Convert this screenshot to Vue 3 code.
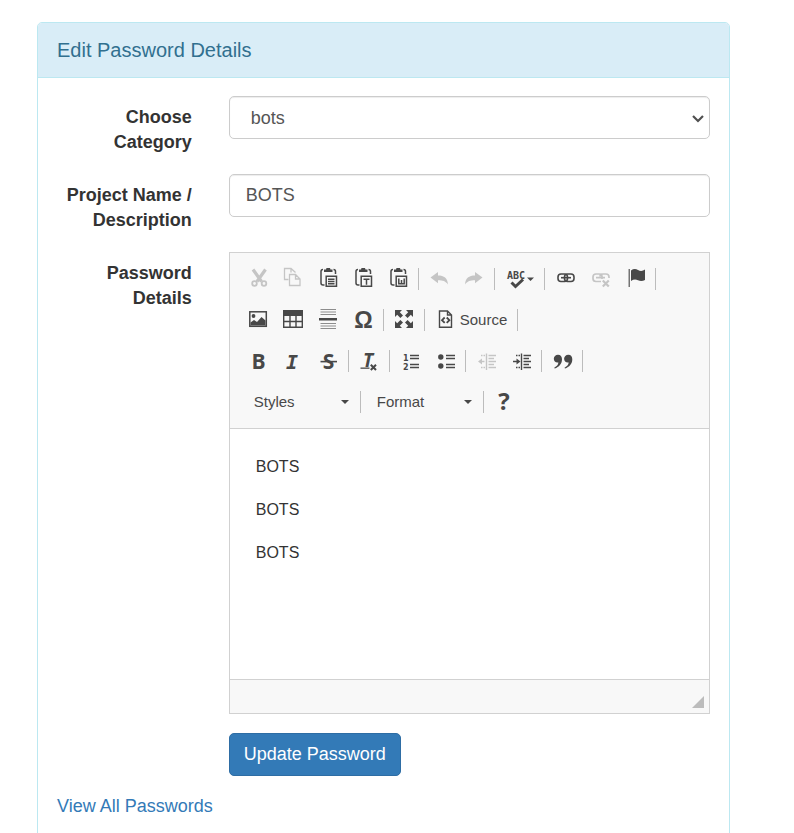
<script setup>
import { ref } from 'vue'

const category = ref('bots')
const project = ref('BOTS')
const paragraphs = ['BOTS', 'BOTS', 'BOTS']
</script>

<template>
  <main class="page">
    <section class="panel">
      <h1 class="panel-heading">Edit Password Details</h1>
      <form class="panel-body" @submit.prevent>
        <div class="group">
          <label class="label" for="category">Choose Category</label>
          <div class="field">
            <div class="select-wrap">
              <select id="category" v-model="category" class="control category">
                <option value="bots">bots</option>
              </select>
              <svg class="chevron" width="14" height="10" viewBox="0 0 14 10"><path d="M2 2l5 5 5-5" fill="none" stroke="#505050" stroke-width="2.200" /></svg>
            </div>
          </div>
        </div>

        <div class="group">
          <label class="label" for="project">Project Name / Description</label>
          <div class="field">
            <input id="project" v-model="project" class="control" type="text" />
          </div>
        </div>

        <div class="group">
          <span id="details-label" class="label">Password Details</span>
          <div class="field">
            <div class="editor">
              <div class="toolbar" role="toolbar" aria-label="Editor toolbar">
                <div class="tools">
                  <button type="button" class="tool off" aria-label="Cut">
                    <svg viewBox="0 0 35 29"><g fill="none" stroke="currentColor"><path d="M12 5.500L20.500 17.500M24.500 5.500L16 17.500" stroke-width="3.200" /><circle cx="13.500" cy="19.500" r="2.300" stroke-width="1.800" /><circle cx="23" cy="19.500" r="2.300" stroke-width="1.800" /></g></svg>
                  </button>
                  <button type="button" class="tool off" aria-label="Copy">
                    <svg viewBox="0 0 35 29"><g fill="none" stroke="currentColor" stroke-width="1.300"><path d="M12.500 15.500h-4v-11h6.500l4.500 4M15 4.500v4" /><path d="M13.500 10.500h6l4.500 4.500v6.500H13.500zM19.500 10.500v4.500h4.500" /></g></svg>
                  </button>
                  <button type="button" class="tool" aria-label="Paste">
                    <svg viewBox="0 0 35 29"><g fill="none" stroke="currentColor" stroke-width="1.500"><path d="M12 5.500q-2 0-2 2v11.500q0 2 2 2h1.500M22.500 5.500q2 0 2 2V10" /><path d="M15.200 12.200h10.300v10H15.200zM17 15.200h6.500M17 17.500h6.500M17 19.800h6.500" /></g><path d="M13 8V5.500h2L15.500 4h3.500l.5 1.500h2V8z" fill="currentColor" /></svg>
                  </button>
                  <button type="button" class="tool" aria-label="Paste as plain text">
                    <svg viewBox="0 0 35 29"><g fill="none" stroke="currentColor" stroke-width="1.500"><path d="M12 5.500q-2 0-2 2v11.500q0 2 2 2h1.500M22.500 5.500q2 0 2 2V10" /><path d="M15.200 12.200h10.300v10H15.200zM17.500 15.200h6M20.500 15.200v5.500" /></g><path d="M13 8V5.500h2L15.500 4h3.500l.5 1.500h2V8z" fill="currentColor" /></svg>
                  </button>
                  <button type="button" class="tool" aria-label="Paste from Word">
                    <svg viewBox="0 0 35 29"><g fill="none" stroke="currentColor" stroke-width="1.500"><path d="M12 5.500q-2 0-2 2v11.500q0 2 2 2h1.500M22.500 5.500q2 0 2 2V10" /><path d="M15.200 12.200h10.300v10H15.200zM17.800 14.500v5.200h5.400v-5.200M20.500 16v3.500" /></g><path d="M13 8V5.500h2L15.500 4h3.500l.5 1.500h2V8z" fill="currentColor" /></svg>
                  </button>
                  <span class="sep"></span>
                  <button type="button" class="tool off" aria-label="Undo">
                    <svg viewBox="0 0 35 29"><path d="M8.500 13.500L16 8v3.500c6 0 9.500 2.500 10 9-2.500-3.500-5-4.300-10-4.300v3z" fill="currentColor" /></svg>
                  </button>
                  <button type="button" class="tool off" aria-label="Redo">
                    <svg viewBox="0 0 35 29"><path d="M25.500 13.500L18 8v3.500c-6 0-9.500 2.500-10 9 2.500-3.500 5-4.300 10-4.300v3z" fill="currentColor" /></svg>
                  </button>
                  <span class="sep"></span>
                  <button type="button" class="tool spell" aria-label="Spell check">
                    <svg viewBox="0 0 44 29"><text x="9" y="15" class="abc">ABC</text><path d="M13.500 18.500l4 4 7.500-7" fill="none" stroke="currentColor" stroke-width="3" /><path d="M29 13.500h7l-3.500 3.500z" fill="currentColor" /></svg>
                  </button>
                  <span class="sep"></span>
                  <button type="button" class="tool" aria-label="Link">
                    <svg viewBox="0 0 35 29"><g fill="none" stroke="currentColor" stroke-width="1.600"><rect x="10" y="10" width="9.500" height="7.500" rx="3" /><rect x="16.500" y="10" width="9.500" height="7.500" rx="3" /><path d="M13 13.700h10" stroke-width="1.600" /></g></svg>
                  </button>
                  <button type="button" class="tool off" aria-label="Unlink">
                    <svg viewBox="0 0 35 29"><g fill="none" stroke="currentColor" stroke-width="1.700"><path d="M18 17.500h-5q-3 0-3-3v-1.500q0-3 3-3h3q3 0 3 2.500v2.500M17 12.500q0-2.500 3-2.500h3q3 0 3 3v1M13 13.700h9" /><path d="M19.800 16.500l6 6M25.800 16.500l-6 6" stroke-width="2.200" /></g></svg>
                  </button>
                  <button type="button" class="tool" aria-label="Anchor">
                    <svg viewBox="0 0 35 29"><path d="M10.500 5h1.500v18h-1.500z" fill="currentColor" opacity=".75" /><path d="M13 6.500q3.500-2.500 7-.5t7-.5v10.500q-3.500 2-7 .3t-7 .7z" fill="currentColor" /></svg>
                  </button>
                  <span class="sep"></span>
                </div>

                <div class="tools">
                  <button type="button" class="tool" aria-label="Image">
                    <svg viewBox="0 0 35 29"><rect x="8.800" y="6.800" width="16.500" height="14.500" fill="none" stroke="currentColor" stroke-width="1.500" /><circle cx="12.500" cy="11" r="1.900" fill="currentColor" /><path d="M9.500 20.500v-3l3.500-2.500 3 2 4.500-5 4 3.500v5z" fill="currentColor" /></svg>
                  </button>
                  <button type="button" class="tool" aria-label="Table">
                    <svg viewBox="0 0 35 29"><path d="M7 5h20v6H7z" fill="currentColor" /><path d="M7.700 10v12.300h18.600V10M14 10v12M20 10v12M8 16.500h18" fill="none" stroke="currentColor" stroke-width="1.400" /></svg>
                  </button>
                  <button type="button" class="tool" aria-label="Horizontal line">
                    <svg viewBox="0 0 35 29"><path d="M9.500 4.500h15.500M9.500 7h15.500M9.500 9.500h15.500M9.500 18.500h15.500M9.500 21h15.500M9.500 23.500h15.500" stroke="#8d8d8d" stroke-width="1.200" /><path d="M8 13h18v2.500H8z" fill="currentColor" /></svg>
                  </button>
                  <button type="button" class="tool" aria-label="Special character">
                    <svg viewBox="0 0 35 29"><text x="17.500" y="23" class="glyph omega">Ω</text></svg>
                  </button>
                  <span class="sep"></span>
                  <button type="button" class="tool" aria-label="Maximize">
                    <svg viewBox="0 0 35 29"><path d="M8 5h7l-2.200 2.200 3.200 3.200-2.600 2.600-3.200-3.200L8 12zM26 5v7l-2.200-2.200-3.200 3.200-2.600-2.600 3.200-3.200L19 5zM8 23v-7l2.200 2.200 3.200-3.200 2.600 2.600-3.200 3.200L15 23zM26 23h-7l2.200-2.200-3.200-3.200 2.600-2.600 3.200 3.200L26 16z" fill="currentColor" /></svg>
                  </button>
                  <span class="sep"></span>
                  <button type="button" class="tool source">
                    <svg viewBox="0 0 32 29"><g fill="none" stroke="currentColor"><path d="M11.500 6h8l4 4v12.300h-12zM19.500 6v4h4" stroke-width="1.400" /><path d="M16.700 12.500l-2.700 2.700 2.700 2.700M18.700 12.500l2.700 2.700-2.700 2.700" stroke-width="1.800" /></g></svg>
                    <span>Source</span>
                  </button>
                  <span class="sep"></span>
                </div>

                <div class="tools">
                  <button type="button" class="tool" aria-label="Bold">
                    <svg viewBox="0 0 35 29"><text x="17.500" y="22.500" class="glyph">B</text></svg>
                  </button>
                  <button type="button" class="tool" aria-label="Italic">
                    <svg viewBox="0 0 35 29"><text x="16" y="22.500" class="glyph italic">I</text></svg>
                  </button>
                  <button type="button" class="tool" aria-label="Strikethrough">
                    <svg viewBox="0 0 35 29"><text x="17.500" y="22.500" class="glyph">S</text><path d="M9.500 14.800h16.500v1.600h-16.500z" fill="currentColor" /></svg>
                  </button>
                  <span class="sep"></span>
                  <button type="button" class="tool" aria-label="Remove format">
                    <svg viewBox="0 0 35 29"><text x="16" y="20.500" class="glyph slant">T</text><path d="M8.500 21.500h9v1.300h-9z" fill="currentColor" /><path d="M18.800 18.800l5.200 5.200M24 18.800l-5.200 5.200" stroke="currentColor" stroke-width="2" /></svg>
                  </button>
                  <span class="sep"></span>
                  <button type="button" class="tool" aria-label="Numbered list">
                    <svg viewBox="0 0 35 29"><text x="10" y="14.500" class="num">1</text><text x="10" y="23.500" class="num">2</text><path d="M17 9.500h9M17 12.500h9M17 18.500h9M17 21.500h9" stroke="currentColor" stroke-width="1.400" /></svg>
                  </button>
                  <button type="button" class="tool" aria-label="Bulleted list">
                    <svg viewBox="0 0 35 29"><circle cx="12.800" cy="11" r="2.700" fill="currentColor" /><circle cx="12.800" cy="20" r="2.700" fill="currentColor" /><path d="M18 9.500h9M18 12.500h9M18 18.500h9M18 21.500h9" stroke="currentColor" stroke-width="1.400" /></svg>
                  </button>
                  <span class="sep"></span>
                  <button type="button" class="tool off" aria-label="Decrease indent">
                    <svg viewBox="0 0 35 29"><path d="M17.500 7.500v16.500M19.500 9.500h7.500M19.500 12.500h5.500M19.500 15.500h7.500M19.500 18.500h5.500M19.500 21.500h7.500M12 9.500h1.500M14.500 9.500h1.500M12 21.500h1.500M14.500 21.500h1.500M11 15.500h4.500" stroke="currentColor" stroke-width="1.400" /><path d="M9 15.500l4-3v6z" fill="currentColor" /></svg>
                  </button>
                  <button type="button" class="tool" aria-label="Increase indent">
                    <svg viewBox="0 0 35 29"><path d="M17.500 7.500v16.500M19.500 9.500h7.500M19.500 12.500h5.500M19.500 15.500h7.500M19.500 18.500h5.500M19.500 21.500h7.500M12 9.500h1.500M14.500 9.500h1.500M12 21.500h1.500M14.500 21.500h1.500M9 15.500h5" stroke="currentColor" stroke-width="1.400" /><path d="M16.500 15.500l-4-3v6z" fill="currentColor" /></svg>
                  </button>
                  <span class="sep"></span>
                  <button type="button" class="tool" aria-label="Block quote">
                    <svg viewBox="0 0 35 29"><path d="M13 8.700c2.600 0 4 1.900 4 4.500 0 4.500-3 7.800-7.300 9.300l-.5-.8c2.600-1.400 4-3 4.200-5.200-2.700.5-4.600-1.300-4.600-3.700 0-2.300 1.800-4.100 4.200-4.100zM23.300 8.700c2.600 0 4 1.900 4 4.500 0 4.500-3 7.800-7.300 9.300l-.5-.8c2.600-1.400 4-3 4.200-5.200-2.700.5-4.600-1.300-4.600-3.700 0-2.300 1.800-4.100 4.200-4.100z" fill="currentColor" /></svg>
                  </button>
                  <span class="sep"></span>
                </div>

                <div class="tools">
                  <div class="combo">
                    <select aria-label="Styles"><option>Styles</option></select>
                    <svg class="caret" viewBox="0 0 8 4"><path d="M0 0h8L4 4z" fill="currentColor" /></svg>
                  </div>
                  <span class="sep"></span>
                  <div class="combo">
                    <select aria-label="Format"><option>Format</option></select>
                    <svg class="caret" viewBox="0 0 8 4"><path d="M0 0h8L4 4z" fill="currentColor" /></svg>
                  </div>
                  <span class="sep"></span>
                  <button type="button" class="tool" aria-label="About">
                    <svg viewBox="0 0 35 29"><text x="17" y="23" class="glyph help">?</text></svg>
                  </button>
                </div>
              </div>
              <div class="content" contenteditable="true" role="textbox" aria-multiline="true" aria-labelledby="details-label">
                <p v-for="(text, i) in paragraphs" :key="i">{{ text }}</p>
              </div>
              <div class="status">
                <svg width="12" height="12" viewBox="0 0 12 12"><path d="M12 0v12H0z" fill="#bcbcbc" /></svg>
              </div>
            </div>
          </div>
        </div>

        <div class="group">
          <div class="field offset">
            <button type="submit" class="submit">Update Password</button>
          </div>
        </div>

        <a class="all-link" href="#passwords">View All Passwords</a>
      </form>
    </section>
  </main>
</template>

<style>
body {
  background: #fff;
}
</style>

<style scoped>
* {
  box-sizing: border-box;
}
.page {
  padding: 22px 64px 0 37px;
  font-family: "Liberation Sans", Arial, sans-serif;
  font-size: 18px;
  line-height: 25px;
  color: #333;
}
.panel {
  border: 1px solid #bce8f1;
  border-radius: 5px;
}
.panel-heading {
  margin: 0;
  padding: 15px 19px;
  font-size: 20px;
  font-weight: 400;
  line-height: 24px;
  color: #31708f;
  background: #d9edf7;
  border-bottom: 1px solid #bce8f1;
  border-radius: 4px 4px 0 0;
}
.panel-body {
  padding: 18px 0 19px;
}
.group {
  display: flex;
  margin-bottom: 19px;
}
.label {
  width: 25%;
  padding: 9px 19px 0;
  font-weight: 700;
  text-align: right;
}
.field {
  width: 75%;
  padding: 0 19px 0 18px;
}
.offset {
  margin-left: 25%;
}
.control {
  display: block;
  width: 100%;
  height: 43px;
  padding: 0 16px;
  font: inherit;
  color: #555;
  background: #fff;
  border: 1px solid #ccc;
  border-radius: 5px;
  box-shadow: inset 0 1px 1px rgba(0, 0, 0, 0.075);
}
.category {
  padding: 1px 21px 0;
  appearance: none;
}
.select-wrap {
  position: relative;
}
.chevron {
  position: absolute;
  top: 18px;
  right: 5px;
  pointer-events: none;
}
.editor {
  border: 1px solid #d1d1d1;
}
.toolbar {
  padding: 5px 11px 6px;
  background: #f8f8f8;
  border-bottom: 1px solid #d1d1d1;
  color: #484848;
}
.tools {
  display: flex;
  align-items: center;
  height: 41px;
}
.tool {
  display: flex;
  align-items: center;
  flex: none;
  width: 35px;
  height: 29px;
  padding: 0;
  color: inherit;
  background: none;
  border: 0;
}
.tool svg {
  flex: 1;
  height: 29px;
  overflow: visible;
}
.off {
  color: #c5c5c5;
}
.spell {
  width: 44px;
}
.source {
  width: 87px;
  font: 15px "Liberation Sans", Arial, sans-serif;
}
.tool.source svg {
  flex: none;
  width: 32px;
}
.sep {
  flex: none;
  width: 1px;
  height: 22px;
  margin: 0 3px 0 2px;
  background: #bcbcbc;
}
.abc {
  font: 700 10px "DejaVu Sans Mono", monospace;
  fill: currentColor;
}
.num {
  font: 700 8px "DejaVu Sans", sans-serif;
  fill: currentColor;
}
.glyph {
  font: 700 21px "Open Sans", sans-serif;
  text-anchor: middle;
  fill: currentColor;
}
.italic {
  font: italic 700 20px "DejaVu Sans Mono", monospace;
}
.slant {
  font-size: 19px;
  font-style: italic;
}
.omega {
  font: 700 23px "Liberation Sans", Arial, sans-serif;
}
.help {
  font-size: 24px;
}
.combo {
  position: relative;
  width: 117px;
}
.combo select {
  display: block;
  width: 100%;
  height: 29px;
  padding: 0 20px 0 13px;
  font: 15px "Liberation Sans", Arial, sans-serif;
  color: inherit;
  background: none;
  border: 0;
  appearance: none;
}
.caret {
  position: absolute;
  top: 13px;
  right: 9px;
  width: 8px;
  height: 4px;
  pointer-events: none;
}
.content {
  min-height: 250px;
  padding: 25px 26px;
  font-size: 16px;
  line-height: 26px;
  outline: none;
}
.content p {
  margin: 0 0 17px;
}
.status {
  display: flex;
  justify-content: flex-end;
  padding: 16px 5px 5px;
  background: #f8f8f8;
  border-top: 1px solid #d1d1d1;
}
.submit {
  height: 43px;
  padding: 0 14px;
  font: inherit;
  color: #fff;
  background: #337ab7;
  border: 1px solid #2e6da4;
  border-radius: 5px;
}
.all-link {
  display: block;
  padding: 0 19px;
  line-height: 23px;
  color: #337ab7;
  text-decoration: none;
}
</style>
